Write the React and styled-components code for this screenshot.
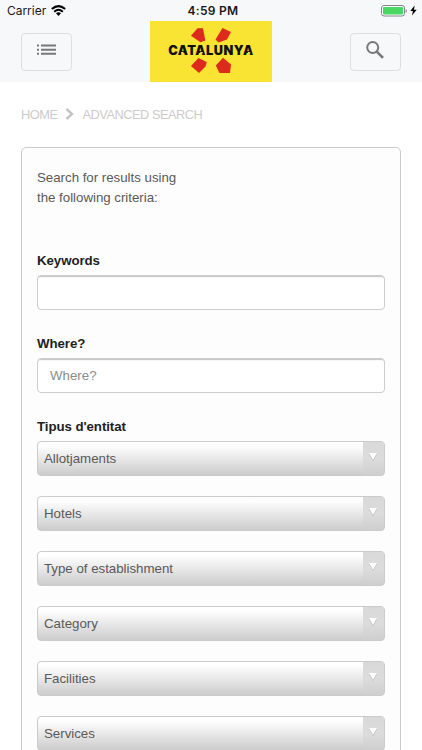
import React from "react";
import styled, { createGlobalStyle } from "styled-components";

const Global = createGlobalStyle`
  * { box-sizing: border-box; }
  html, body { margin: 0; background: #fff; }
  body { font-family: "Liberation Sans", Arial, sans-serif; font-size: 13.3px; letter-spacing: -0.02px; color: #595959; height: 750px; overflow: hidden; }
`;
const Screen = styled.div`
  width: 422px;
  height: 750px;
  overflow: hidden;
  background: #fff;
`;
const Header = styled.header`
  height: 82px;
  background: #f7f8fa;
`;
const StatusBar = styled.div`
  height: 21px;
  display: grid;
  grid-template-columns: 1fr auto 1fr;
  align-items: center;
  padding: 0 5px 0 7px;
  font-family: Inter, sans-serif;
  font-size: 12px;
  color: #1a1a1a;
`;
const Carrier = styled.div`
  display: flex;
  align-items: center;
  gap: 5px;
  letter-spacing: -0.03px;
`;
const Time = styled.div`
  font-weight: 600;
  font-size: 12px;
  letter-spacing: 0.3px;
  padding-left: 2px;
`;
const Power = styled.div`
  display: flex;
  justify-content: flex-end;
  align-items: center;
  gap: 3px;
`;
const Nav = styled.nav`
  height: 61px;
  display: flex;
  justify-content: space-between;
  align-items: flex-start;
  padding: 0 21px;
`;
const NavButton = styled.button`
  width: 51px;
  height: 38px;
  margin-top: 11.5px;
  padding: 0 1px 3px 0;
  border: 1px solid #dedfe1;
  border-radius: 4px;
  background: transparent;
  display: flex;
  align-items: center;
  justify-content: center;
`;
const Logo = styled.svg`
  display: block;
  width: 122px;
  height: 61px;
  background: #f9e333;
`;
const Crumbs = styled.div`
  display: flex;
  align-items: center;
  height: 20px;
  margin: 22px 21px 23px;
  gap: 8px;
  font-size: 12.8px;
  letter-spacing: -0.48px;
  color: #cdcbcc;
`;
const Card = styled.form`
  margin: 0 21px;
  height: 640px;
  padding: 20px 15px 0;
  border: 1px solid #cbcbcb;
  border-radius: 5px;
  background: #fdfdfd;
`;
const Intro = styled.p`
  margin: 0 0 43px;
  width: 160px;
  line-height: 20px;
`;
const Field = styled.div`
  margin-bottom: ${(p) => p.$gap}px;
`;
const Label = styled.label`
  display: block;
  height: 20px;
  line-height: 20px;
  margin-bottom: 4px;
  font-weight: bold;
  letter-spacing: -0.08px;
  color: #1f1f23;
`;
const Input = styled.input`
  display: block;
  width: 100%;
  height: 35px;
  padding: 0 12px;
  border: 1px solid #cdcdcd;
  border-radius: 4px;
  background: #fff;
  box-shadow: inset 0 2px 1px -1px #c4c4c4;
  font: inherit;
  &::placeholder { color: #8c8c8c; opacity: 1; }
`;
const Selects = styled.div`
  display: grid;
  gap: 20px;
`;
const Select = styled.div`
  height: 35px;
  display: flex;
  border: 1px solid #cbcbcb;
  border-radius: 4px;
  overflow: hidden;
  background: linear-gradient(#fff 10%, #cccccc);
`;
const SelectText = styled.span`
  flex: 1;
  padding-left: 6px;
  line-height: 34px;
`;
const SelectArrow = styled.span`
  width: 21px;
  background: linear-gradient(#d9d9d9, #dcdcdc 50%, #cfcfcf);
  display: flex;
  justify-content: center;
  padding: 11px 1px 0 0;
`;

const options = ["Allotjaments", "Hotels", "Type of establishment", "Category", "Facilities", "Services"];

export default function App() {
  return (
    <Screen>
      <Global />
      <Header>
        <StatusBar>
          <Carrier>
            Carrier
            <svg width="15" height="11" viewBox="0 0 15 11" fill="none" stroke="#000" strokeWidth="2">
              <path d="M.8 4.1Q7.5-1.9 14.2 4.1M3.2 6.7Q7.5 2.9 11.8 6.7" />
              <path d="M5 8.3Q7.5 6.2 10 8.3L7.5 10.9Z" fill="#000" stroke="none" />
            </svg>
          </Carrier>
          <Time>4:59 PM</Time>
          <Power>
            <svg width="26" height="12" viewBox="0 0 26 12">
              <rect x=".5" y=".5" width="23" height="10.5" rx="2.5" fill="#fff" stroke="#858589" />
              <rect x="2" y="2" width="20" height="7.5" rx="1" fill="#4bd763" />
              <path d="M24.7 4v4q1.2-.6 1.2-2t-1.2-2" fill="#858589" />
            </svg>
            <svg width="7" height="11" viewBox="0 0 7 11"><path d="M4.6.4.3 6h2.6L2 10.6 6.7 4.7H4Z" /></svg>
          </Power>
        </StatusBar>
        <Nav>
          <NavButton type="button" aria-label="Menu">
            <svg width="19" height="12" viewBox="0 0 19 12" fill="#77787a">
              <path d="M0 .5h2v2H0zM4 .5h15v2H4zM0 4.7h2v2H0zM4 4.7h15v2H4zM0 8.8h2v2H0zM4 8.8h15v2H4z" />
            </svg>
          </NavButton>
          <Logo viewBox="0 0 122 61">
            <g fill="#dc2a1d">
              <path d="M41 14.8 47.5 7.3H53L55.3 19.5 50.5 21.3Z" />
              <path d="M65.5 18.5 72.5 7 81 11 77 18.5 68.5 21.5Z" />
              <path d="M41 45 48.5 37 56.7 41 55.5 45.5 49 52Z" />
              <path d="M65.8 44.5 73 36.8 81 43.5 80 52H69.5Z" />
            </g>
            <text x="18.2" y="34.3" textLength="85.5" lengthAdjust="spacingAndGlyphs" fontFamily="Inter, sans-serif" fontWeight="900" fontSize="12.5" letterSpacing="0.5" fill="#11110a">CATALUNYA</text>
            <path d="M31.1 31.8h2.4M50.2 31.8h2.4M97.8 31.8h2.4" stroke="#f9e333" strokeWidth="1.6" />
          </Logo>
          <NavButton type="button" aria-label="Search">
            <svg width="18" height="18" viewBox="0 0 18 18" fill="none" stroke="#77787a" strokeWidth="2">
              <circle cx="6.7" cy="6.5" r="5.5" />
              <path d="M10.8 10.6 17 16.9" strokeWidth="2.6" />
            </svg>
          </NavButton>
        </Nav>
      </Header>
      <Crumbs>
        <span>HOME</span>
        <svg width="9" height="12" viewBox="0 0 9 12" fill="none" stroke="#c4c4c4" strokeWidth="2.4"><path d="M1.5 1 7 6 1.5 11" /></svg>
        <span>ADVANCED SEARCH</span>
      </Crumbs>
      <Card>
        <Intro>Search for results using the following criteria:</Intro>
        <Field $gap={24}>
          <Label>Keywords</Label>
          <Input />
        </Field>
        <Field $gap={24}>
          <Label>Where?</Label>
          <Input placeholder="Where?" />
        </Field>
        <Label>Tipus d'entitat</Label>
        <Selects>
          {options.map((name) => (
            <Select key={name}>
              <SelectText>{name}</SelectText>
              <SelectArrow>
                <svg width="8" height="8" viewBox="0 0 8 8"><path d="M0 1h8L4 8Z" fill="#b5b5b5" /><path d="M0 0h8L4 7Z" fill="#fff" /></svg>
              </SelectArrow>
            </Select>
          ))}
        </Selects>
      </Card>
    </Screen>
  );
}
